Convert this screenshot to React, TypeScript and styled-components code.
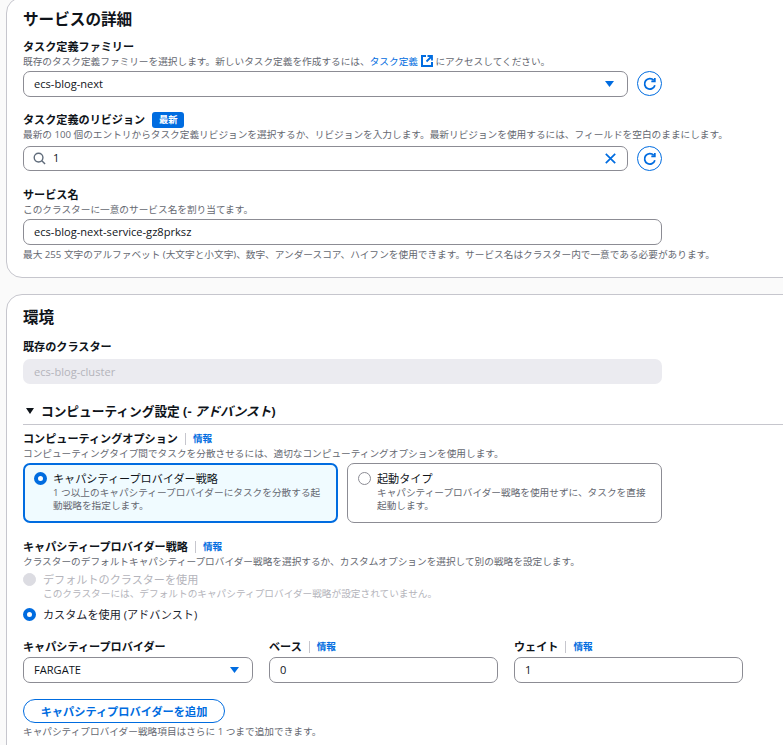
import styled, {createGlobalStyle} from 'styled-components';

const GlobalStyle = createGlobalStyle`
  html, body {
    margin: 0;
    padding: 0;
    height: 745px;
    overflow: hidden;
    background: #fafafa;
  }
  body {
    font-family: 'Open Sans', 'Noto Sans CJK JP', sans-serif;
    color: #0f141a;
  }
`;

const COLORS = {
  blue: '#006ce0',
  muted: '#656871',
  border: '#8c8c94',
};

function RefreshIcon() {
  return (
    <svg width="14" height="14" viewBox="0 0 16 16" fill="none" stroke={COLORS.blue} strokeWidth="2">
      <path d="M13.6 9.5A6 6 0 1 1 12.3 3.8" />
      <path d="M13.5 1v4h-4" strokeLinejoin="miter" />
    </svg>
  );
}

function ExternalIcon() {
  return (
    <ExternalSvg width="12" height="12" viewBox="0 0 12 12" fill="none" stroke={COLORS.blue}>
      <path d="M5 1H1v10h10V7" strokeWidth="2" />
      <path d="M6.5 1H11v4.500M11 1 5.500 6.500" strokeWidth="1.800" />
    </ExternalSvg>
  );
}

function Caret() {
  return (
    <CaretSvg width="9" height="6" viewBox="0 0 9 6">
      <path d="M0 0h9L4.500 6z" fill={COLORS.blue} />
    </CaretSvg>
  );
}

function SearchIcon() {
  return (
    <SearchSvg width="13" height="13" viewBox="0 0 14 14" fill="none" stroke="#5f6b7a" strokeWidth="1.500">
      <circle cx="6" cy="6" r="4.700" />
      <path d="M9.500 9.500 13 13" />
    </SearchSvg>
  );
}

function ClearIcon() {
  return (
    <svg width="11" height="11" viewBox="0 0 11 11" fill="none" stroke={COLORS.blue} strokeWidth="1.700">
      <path d="M0.800 0.800l9.400 9.400M10.200 0.800l-9.400 9.400" />
    </svg>
  );
}

function App() {
  return (
    <Page>
      <GlobalStyle />
      <FirstCard>
        <Heading>サービスの詳細</Heading>
        <LabelRow $top={8}>
          <Label>タスク定義ファミリー</Label>
        </LabelRow>
        <Description>
          既存のタスク定義ファミリーを選択します。新しいタスク定義を作成するには、
          <InlineLink>タスク定義</InlineLink>
          <ExternalIcon /> にアクセスしてください。
        </Description>
        <RefreshRow>
          <Field $width={605}>
            <FieldText>ecs-blog-next</FieldText>
            <Caret />
          </Field>
          <RoundButton>
            <RefreshIcon />
          </RoundButton>
        </RefreshRow>

        <LabelRow $top={15}>
          <Label>タスク定義のリビジョン</Label>
          <Badge>最新</Badge>
        </LabelRow>
        <Description>
          最新の 100 個のエントリからタスク定義リビジョンを選択するか、リビジョンを入力します。最新リビジョンを使用するには、フィールドを空白のままにします。
        </Description>
        <RefreshRow $top={5}>
          <Field $width={605} $height={25}>
            <SearchIcon />
            <SearchText>1</SearchText>
            <ClearIcon />
          </Field>
          <RoundButton>
            <RefreshIcon />
          </RoundButton>
        </RefreshRow>

        <LabelRow $top={16}>
          <Label>サービス名</Label>
        </LabelRow>
        <Description>このクラスターに一意のサービス名を割り当てます。</Description>
        <NameRow>
          <Field $width={639}>
            <FieldText>ecs-blog-next-service-gz8prksz</FieldText>
          </Field>
        </NameRow>
        <Constraint>
          最大 255 文字のアルファベット (大文字と小文字)、数字、アンダースコア、ハイフンを使用できます。サービス名はクラスター内で一意である必要があります。
        </Constraint>
      </FirstCard>

      <SecondCard>
        <Heading>環境</Heading>
        <LabelRow $top={10}>
          <Label>既存のクラスター</Label>
        </LabelRow>
        <DisabledField>ecs-blog-cluster</DisabledField>

        <Expander>
          <svg width="8" height="6" viewBox="0 0 8 6">
            <path d="M0 0h8L4 6z" fill="#0f141a" />
          </svg>
          <span>
            コンピューティング設定 (- <em>アドバンスト</em>)
          </span>
        </Expander>

        <LabelRow $top={6}>
          <Label>コンピューティングオプション</Label>
          <InfoLink>情報</InfoLink>
        </LabelRow>
        <Description>
          コンピューティングタイプ間でタスクを分散させるには、適切なコンピューティングオプションを使用します。
        </Description>
        <TileRow>
          <Tile $selected>
            <Radio $checked />
            <TileBody>
              <TileTitle>キャパシティープロバイダー戦略</TileTitle>
              <TileText>
                1 つ以上のキャパシティープロバイダーにタスクを分散する起動戦略を指定します。
              </TileText>
            </TileBody>
          </Tile>
          <Tile>
            <Radio />
            <TileBody>
              <TileTitle>起動タイプ</TileTitle>
              <TileText>
                キャパシティープロバイダー戦略を使用せずに、タスクを直接起動します。
              </TileText>
            </TileBody>
          </Tile>
        </TileRow>

        <LabelRow $top={16}>
          <Label>キャパシティープロバイダー戦略</Label>
          <InfoLink>情報</InfoLink>
        </LabelRow>
        <Description>
          クラスターのデフォルトキャパシティープロバイダー戦略を選択するか、カスタムオプションを選択して別の戦略を設定します。
        </Description>

        <RadioOption $top={4}>
          <Radio $disabled />
          <TileBody>
            <RadioTitle $disabled>デフォルトのクラスターを使用</RadioTitle>
            <RadioHint>このクラスターには、デフォルトのキャパシティプロバイダー戦略が設定されていません。</RadioHint>
          </TileBody>
        </RadioOption>
        <RadioOption $top={7}>
          <Radio $checked />
          <RadioTitle>カスタムを使用 (アドバンスト)</RadioTitle>
        </RadioOption>

        <ProviderGrid>
          <div>
            <ColumnLabel>
              <Label>キャパシティープロバイダー</Label>
            </ColumnLabel>
            <Field>
              <FieldText>FARGATE</FieldText>
              <Caret />
            </Field>
          </div>
          <div>
            <ColumnLabel>
              <Label>ベース</Label>
              <InfoLink>情報</InfoLink>
            </ColumnLabel>
            <Field>
              <FieldText>0</FieldText>
            </Field>
          </div>
          <div>
            <ColumnLabel>
              <Label>ウェイト</Label>
              <InfoLink>情報</InfoLink>
            </ColumnLabel>
            <Field>
              <FieldText>1</FieldText>
            </Field>
          </div>
        </ProviderGrid>

        <AddButton>キャパシティプロバイダーを追加</AddButton>
        <ButtonHint>キャパシティプロバイダー戦略項目はさらに 1 つまで追加できます。</ButtonHint>
      </SecondCard>
    </Page>
  );
}

const Page = styled.div`
  display: flex;
  flex-direction: column;
  gap: 16px;
  width: 900px;
  margin-top: -3px;
  padding-left: 6px;
`;

const Card = styled.section`
  box-sizing: border-box;
  background: #fff;
  border: 1px solid #c6c6cd;
  border-radius: 16px;
  padding-left: 16px;
`;

const FirstCard = styled(Card)`
  height: 281px;
  padding-top: 9px;
`;

const SecondCard = styled(Card)`
  height: 480px;
  padding-top: 10px;
`;

const Heading = styled.h2`
  margin: 0;
  font-size: 15.600px;
  line-height: 24px;
  font-weight: 700;
`;

const Label = styled.span`
  font-size: 11.120px;
  line-height: 14px;
  font-weight: 700;
`;

const LabelRow = styled.div<{$top: number}>`
  display: flex;
  align-items: center;
  height: 16px;
  margin-top: ${props => props.$top}px;
`;

const ColumnLabel = styled.div`
  display: flex;
  align-items: center;
  height: 16px;
  margin-bottom: 2px;
`;

const Description = styled.div`
  font-size: 9.660px;
  line-height: 13px;
  color: ${COLORS.muted};
  white-space: nowrap;
`;

const Constraint = styled(Description)`
  margin-top: 3px;
`;

const ButtonHint = styled(Description)`
  margin-top: 2px;
`;

const InlineLink = styled.span`
  color: ${COLORS.blue};
`;

const ExternalSvg = styled.svg`
  margin-left: 3px;
  vertical-align: -2px;
`;

const InfoLink = styled.span`
  margin-left: 7px;
  padding-left: 7px;
  border-left: 1px solid #c6c6cd;
  font-size: 9.600px;
  line-height: 12px;
  font-weight: 700;
  color: ${COLORS.blue};
`;

const Badge = styled.span`
  margin-left: 7px;
  width: 32px;
  height: 16px;
  border-radius: 3px;
  background: ${COLORS.blue};
  color: #fff;
  font-size: 9.300px;
  line-height: 16px;
  font-weight: 700;
  text-align: center;
`;

const RefreshRow = styled.div<{$top?: number}>`
  display: flex;
  align-items: flex-start;
  gap: 9px;
  margin-top: ${props => props.$top ?? 3}px;
`;

const NameRow = styled.div`
  margin-top: 3px;
`;

const Field = styled.div<{$width?: number; $height?: number}>`
  box-sizing: border-box;
  display: flex;
  align-items: center;
  width: ${props => (props.$width ? `${props.$width}px` : '100%')};
  height: ${props => props.$height ?? 26}px;
  padding: 0 11px 0 10px;
  border: 1px solid ${COLORS.border};
  border-radius: 7px;
  background: #fff;
`;

const FieldText = styled.span`
  flex: 1;
  padding-bottom: 2px;
  font-size: 11.100px;
`;

const SearchText = styled(FieldText)`
  margin-left: 7px;
`;

const CaretSvg = styled.svg`
  margin-right: 2px;
`;

const SearchSvg = styled.svg`
  margin-left: -1px;
`;

const RoundButton = styled.button`
  box-sizing: border-box;
  display: flex;
  align-items: center;
  justify-content: center;
  width: 25px;
  height: 25px;
  padding: 0;
  border: 1px solid ${COLORS.blue};
  border-radius: 50%;
  background: #fff;
`;

const DisabledField = styled.div`
  box-sizing: border-box;
  width: 639px;
  height: 25px;
  margin-top: 4px;
  padding-left: 11px;
  border-radius: 7px;
  background: #ebebf0;
  color: #b4b4bb;
  font-size: 11.100px;
  line-height: 25px;
`;

const Expander = styled.div`
  box-sizing: border-box;
  display: flex;
  align-items: center;
  gap: 7px;
  height: 28px;
  margin-top: 13px;
  padding-left: 3px;
  border-bottom: 1px solid #c6c6cd;
  font-size: 12.700px;
  font-weight: 700;

  em {
    font-style: italic;
  }
`;

const TileRow = styled.div`
  display: flex;
  gap: 9px;
  margin-top: 3px;
`;

const Tile = styled.div<{$selected?: boolean}>`
  box-sizing: border-box;
  display: flex;
  gap: 6px;
  width: 315px;
  height: 60px;
  padding: ${props => (props.$selected ? '6px 9px' : '7px 10px')};
  border: ${props => (props.$selected ? `2px solid ${COLORS.blue}` : `1px solid ${COLORS.border}`)};
  border-radius: 7px;
  background: ${props => (props.$selected ? '#f0fbff' : '#fff')};
`;

const TileBody = styled.div`
  display: flex;
  flex-direction: column;
`;

const TileTitle = styled.div`
  font-size: 11.120px;
  line-height: 15px;
`;

const TileText = styled.div`
  font-size: 9.660px;
  line-height: 13px;
  color: ${COLORS.muted};
`;

const Radio = styled.span<{$checked?: boolean; $disabled?: boolean}>`
  box-sizing: border-box;
  flex: none;
  width: 13px;
  height: 13px;
  margin-top: 1px;
  border-radius: 50%;
  background: ${props => (props.$disabled ? '#dcdce2' : '#fff')};
  border: ${props =>
    props.$checked
      ? `4px solid ${COLORS.blue}`
      : props.$disabled
        ? '1px solid #dcdce2'
        : `1px solid ${COLORS.border}`};
`;

const RadioOption = styled.div<{$top: number}>`
  display: flex;
  gap: 7px;
  margin-top: ${props => props.$top}px;
`;

const RadioTitle = styled.div<{$disabled?: boolean}>`
  font-size: 11.120px;
  line-height: 15px;
  color: ${props => (props.$disabled ? '#b4b4bb' : '#1b232d')};
`;

const RadioHint = styled.div`
  font-size: 9.660px;
  line-height: 13px;
  color: #b4b4bb;
  white-space: nowrap;
`;

const ProviderGrid = styled.div`
  display: grid;
  grid-template-columns: 230px 229px 229px;
  gap: 16px;
  margin-top: 17px;
`;

const AddButton = styled.button`
  display: block;
  box-sizing: border-box;
  width: 202px;
  height: 24px;
  margin-top: 16px;
  padding: 0;
  border: 1px solid ${COLORS.blue};
  border-radius: 12px;
  background: #fff;
  color: ${COLORS.blue};
  font-family: inherit;
  font-size: 11.200px;
  font-weight: 700;
`;

export default App;
